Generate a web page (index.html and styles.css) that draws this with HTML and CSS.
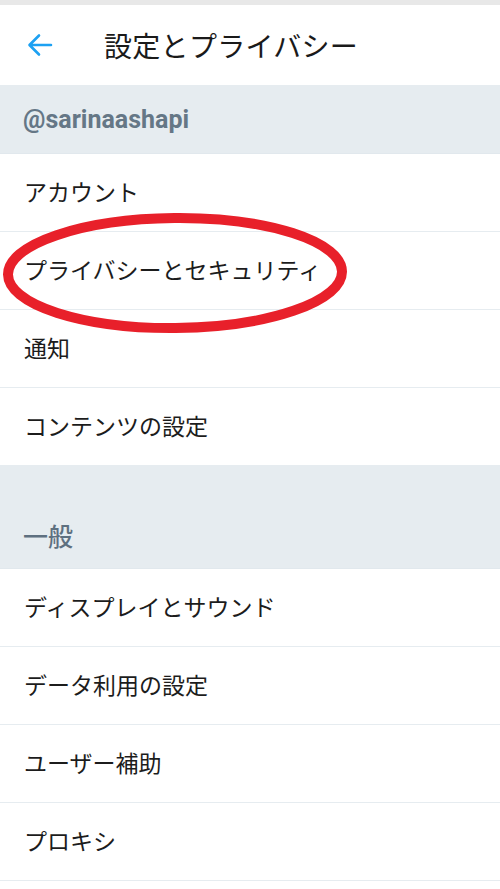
FILE: index.html
```html
<!DOCTYPE html>
<html lang="ja">
<head>
<meta charset="utf-8">
<link rel="stylesheet" href="styles.css">
</head>
<body>
<div class="statusbar"></div>
<header class="header">
  <svg class="back" width="26" height="26" viewBox="0 0 26 26"><path d="M24 13H3M12 3.5L2.5 13 12 22.5" fill="none" stroke="#1da1f2" stroke-width="2.6" stroke-linecap="round" stroke-linejoin="round"/></svg>
  <h1 class="title">設定とプライバシー</h1>
</header>
<div class="section user">@sarinaashapi</div>
<div class="row">アカウント</div>
<div class="row marked">プライバシーとセキュリティ
  <svg class="circle" width="360" height="130" viewBox="0 0 360 130"><ellipse cx="175" cy="65" rx="167" ry="55" fill="none" stroke="#e8202a" stroke-width="10" transform="rotate(-0.5 175 65)"/></svg>
</div>
<div class="row">通知</div>
<div class="row">コンテンツの設定</div>
<div class="section general">一般</div>
<div class="row">ディスプレイとサウンド</div>
<div class="row">データ利用の設定</div>
<div class="row">ユーザー補助</div>
<div class="row">プロキシ</div>
</body>
</html>
```
FILE: styles.css
```css
html, body {
  margin: 0;
  padding: 0;
  background: #fff;
  font-family: Roboto, "Noto Sans CJK JP", sans-serif;
  color: #14171a;
  overflow: hidden;
}
.statusbar {
  height: 5px;
  background: #e8e8e8;
}
.header {
  height: 80px;
  display: flex;
  align-items: center;
}
.back {
  margin-left: 27px;
  margin-right: 51px;
  flex-shrink: 0;
}
.title {
  margin: 0;
  font-size: 28px;
  font-weight: 400;
  color: #1a1a1a;
  letter-spacing: 0.3px;
}
.section {
  background: #e6ecf0;
  color: #657786;
  padding-left: 23px;
  display: flex;
  border-bottom: 1px solid #e1e8ed;
}
.section.user {
  height: 68px;
  align-items: center;
  font-weight: 700;
  font-size: 25px;
}
.section.general {
  height: 103px;
  align-items: flex-end;
  box-sizing: border-box;
  padding-bottom: 15px;
  font-size: 25px;
  font-weight: 500;
  color: #5e7080;
  font-family: "Noto Sans CJK JP", sans-serif;
}
.row {
  height: 77px;
  box-sizing: border-box;
  padding-bottom: 3px;
  border-bottom: 1px solid #e6ecf0;
  display: flex;
  align-items: center;
  padding-left: 24px;
  font-size: 23px;
  font-family: "Noto Sans CJK JP", sans-serif;
  color: #1c1c1c;
}
.row { height: 78px; }
.marked {
  position: relative;
}
.circle {
  position: absolute;
  left: 0;
  top: -24px;
  pointer-events: none;
}
```
